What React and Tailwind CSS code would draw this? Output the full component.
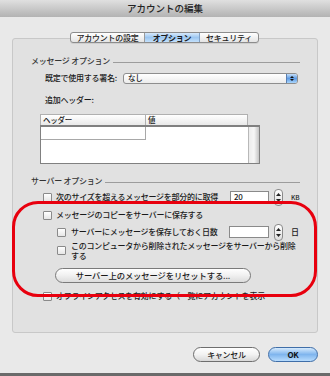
import React from 'react';

function CheckBox({ className = '' }) {
  return (
    <span
      className={`block w-[9px] h-[9px] shrink-0 border border-[#8a8a8a] rounded-[1px] bg-linear-to-b from-white to-[#e6e6e6] ${className}`}
    />
  );
}

function Stepper() {
  return (
    <span className="flex flex-col items-center justify-center gap-[3px] w-[9px] h-[17px] shrink-0 border border-[#8a8a8a] rounded-[4px] bg-linear-to-b from-white to-[#dedede]">
      <svg width="5" height="3" viewBox="0 0 5 3">
        <path d="M2.5 0L5 3H0z" fill="#222" />
      </svg>
      <svg width="5" height="3" viewBox="0 0 5 3">
        <path d="M0 0h5L2.5 3z" fill="#222" />
      </svg>
    </span>
  );
}

function SectionTitle({ children }) {
  return (
    <div className="flex items-center h-[12px] pl-[18px] pr-[17px] text-[#333]">
      <span className="whitespace-nowrap">{children}</span>
      <span className="flex-1 ml-[3px] mt-[3px] h-px bg-[#9c9c9c]" />
    </div>
  );
}

export default function App() {
  return (
    <div className="relative w-[330px] h-[376px] overflow-hidden bg-[#e9e9e9] text-[8px] font-medium tracking-[-0.25px] text-[#1a1a1a] font-['Noto_Sans_CJK_JP','Noto_Sans',sans-serif] leading-none">
      {/* Title bar */}
      <div className="h-[17px] flex items-center justify-center bg-linear-to-b from-[#e0e0e0] to-[#b3b3b3] text-[9.5px] tracking-normal text-[#222]">
        アカウントの編集
      </div>

      {/* Tabs */}
      <div className="relative z-10 mt-[15px] flex justify-center pl-[12px] pr-[12px]">
        <div className="flex h-[11px] ml-[-1px] border border-[#8c8c8c] rounded-[3px] overflow-hidden bg-linear-to-b from-white to-[#e4e4e4] shadow-[0_1px_0_rgba(0,0,0,0.08)]">
          <div className="w-[74px] flex items-center justify-center border-r border-[#9a9a9a]">アカウントの設定</div>
          <div className="w-[55px] flex items-center justify-center border-r border-[#7f9fc4] bg-linear-to-b from-[#d7e9fb] via-[#9cc6f0] to-[#c3e0fb] font-bold">オプション</div>
          <div className="w-[58px] flex items-center justify-center">セキュリティ</div>
        </div>
      </div>

      {/* Group box */}
      <div className="mx-[12px] -mt-[5px] h-[295px] border border-[#c8c8c8] rounded-[3px] bg-[#e1e1e1] pt-[16px]">
        <SectionTitle>メッセージ オプション</SectionTitle>

        <div className="flex items-center h-[12px] mt-[5px] pl-[32px]">
          <span className="w-[78px] whitespace-nowrap">既定で使用する署名:</span>
          <div className="flex items-center w-[175px] h-[11px] border border-[#8e8e8e] rounded-[3px] bg-linear-to-b from-white to-[#ececec] overflow-hidden">
            <span className="flex-1 pl-[4px] text-[7.5px]">なし</span>
            <span className="flex flex-col items-center justify-center gap-[1px] w-[11px] h-full bg-linear-to-b from-[#c4def8] via-[#5e9be4] to-[#a9d5fb] border-l border-[#5a7fb0]">
              <svg width="4" height="2" viewBox="0 0 4 2"><path d="M2 0L4 2H0z" fill="#111" /></svg>
              <svg width="4" height="2" viewBox="0 0 4 2"><path d="M0 0h4L2 2z" fill="#111" /></svg>
            </span>
          </div>
        </div>

        <div className="flex items-center h-[12px] mt-[10px] pl-[32px]">追加ヘッダー:</div>

        {/* Header table */}
        <div className="mt-[8px] pl-[27px] text-[7.5px]">
          <div className="flex w-[208px] h-[11px] border border-b-0 border-[#b0b0b0] bg-linear-to-b from-white to-[#e9e9e9]">
            <div className="w-[105px] flex items-center pl-[2px] border-r border-[#b0b0b0]">ヘッダー</div>
            <div className="flex-1 flex items-center pl-[2px]">値</div>
          </div>
          <div className="flex w-[220px] h-[39px] border border-[#808080] border-t-2 bg-white">
            <div className="w-[207px]">
              <div className="w-[105px] h-[13px] border-r border-b border-[#a8a8a8] bg-white" />
            </div>
            <div className="flex-1 border-l border-[#b8b8b8] bg-linear-to-r from-[#ececec] via-[#f6f6f6] to-[#c4c4c4]" />
          </div>
        </div>

        <div className="mt-[11px]">
          <SectionTitle>サーバー オプション</SectionTitle>
        </div>

        <div className="flex items-center h-[12px] mt-[4px] pl-[30px]">
          <CheckBox />
          <span className="ml-[4px] w-[174px] whitespace-nowrap">次のサイズを超えるメッセージを部分的に取得</span>
          <span className="flex items-center w-[39px] h-[12px] pl-[3px] border border-[#8a8a8a] bg-white">20</span>
          <span className="ml-[5px]"><Stepper /></span>
          <span className="ml-[8px] text-[6.5px] tracking-normal">KB</span>
        </div>

        <div className="flex items-center h-[12px] mt-[6px] pl-[30px]">
          <CheckBox />
          <span className="ml-[4px] whitespace-nowrap">メッセージのコピーをサーバーに保存する</span>
        </div>

        <div className="flex items-center h-[12px] mt-[5px] pl-[44px]">
          <CheckBox />
          <span className="ml-[5px] w-[158px] whitespace-nowrap">サーバーにメッセージを保存しておく日数</span>
          <span className="w-[40px] h-[12px] border border-[#8a8a8a] bg-white" />
          <span className="ml-[5px]"><Stepper /></span>
          <span className="ml-[8px]">日</span>
        </div>

        <div className="flex items-start mt-[3px] pl-[44px]">
          <CheckBox className="mt-[5px]" />
          <span className="ml-[5px] leading-[9.5px] whitespace-nowrap">
            このコンピュータから削除されたメッセージをサーバーから削除
            <br />
            する
          </span>
        </div>

        <div className="mt-[8px] pl-[42px]">
          <button className="w-[196px] h-[15px] rounded-full border border-[#7a7a7a] bg-linear-to-b from-white via-[#f0f0f0] to-[#dcdcdc] text-[8.3px] tracking-[-0.1px] text-[#1a1a1a] flex items-center justify-center">
            サーバー上のメッセージをリセットする...
          </button>
        </div>

        <div className="flex items-center h-[12px] mt-[7px] pl-[30px]">
          <CheckBox />
          <span className="ml-[4px] whitespace-nowrap">オフラインアクセスを有効にする（一覧にアカウントを表示</span>
        </div>
      </div>

      {/* Dialog buttons */}
      <div className="flex justify-end gap-[8px] pr-[12px] mt-[14px]">
        <button className="w-[67px] h-[15px] rounded-full border border-[#6e6e6e] bg-linear-to-b from-white via-[#f2f2f2] to-[#d8d8d8] text-[8px] text-[#1a1a1a] flex items-center justify-center">
          キャンセル
        </button>
        <button className="w-[50px] h-[15px] rounded-full border border-[#3f6ea8] bg-linear-to-b from-[#d6eafc] via-[#7fb5ee] to-[#b8dcfd] text-[8px] font-bold text-[#111] flex items-center justify-center">
          OK
        </button>
      </div>

      {/* Bottom window edge */}
      <div className="absolute left-0 right-0 bottom-0 h-[3px] bg-[#6a6a6a]" />

      {/* Red highlight */}
      <div className="absolute left-[12px] top-[201px] w-[305px] h-[96px] border-[3.5px] border-[#e8000e] rounded-[26px]" />
    </div>
  );
}
